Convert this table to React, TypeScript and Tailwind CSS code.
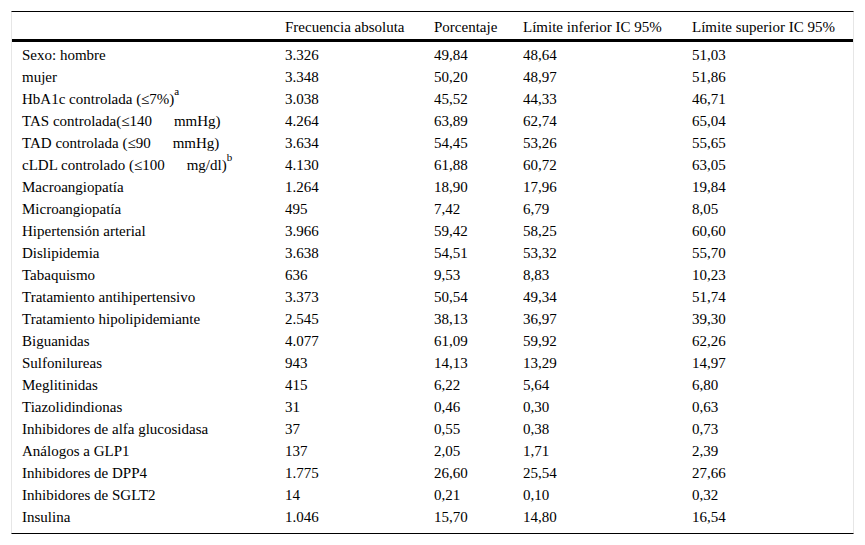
import React from "react";

const Sup = ({ c }: { c: string }) => (
  <span className="text-[11px] align-top relative -top-[2px] leading-none">{c}</span>
);

const Gap = () => <span className="inline-block w-[22px]" />;

const rows: [React.ReactNode, string, string, string, string][] = [
  ["Sexo: hombre", "3.326", "49,84", "48,64", "51,03"],
  ["mujer", "3.348", "50,20", "48,97", "51,86"],
  [<>HbA1c controlada (≤7%)<Sup c="a" /></>, "3.038", "45,52", "44,33", "46,71"],
  [<>TAS controlada(≤140<Gap />mmHg)</>, "4.264", "63,89", "62,74", "65,04"],
  [<>TAD controlada (≤90<Gap />mmHg)</>, "3.634", "54,45", "53,26", "55,65"],
  [<>cLDL controlado (≤100<Gap />mg/dl)<Sup c="b" /></>, "4.130", "61,88", "60,72", "63,05"],
  ["Macroangiopatía", "1.264", "18,90", "17,96", "19,84"],
  ["Microangiopatía", "495", "7,42", "6,79", "8,05"],
  ["Hipertensión arterial", "3.966", "59,42", "58,25", "60,60"],
  ["Dislipidemia", "3.638", "54,51", "53,32", "55,70"],
  ["Tabaquismo", "636", "9,53", "8,83", "10,23"],
  ["Tratamiento antihipertensivo", "3.373", "50,54", "49,34", "51,74"],
  ["Tratamiento hipolipidemiante", "2.545", "38,13", "36,97", "39,30"],
  ["Biguanidas", "4.077", "61,09", "59,92", "62,26"],
  ["Sulfonilureas", "943", "14,13", "13,29", "14,97"],
  ["Meglitinidas", "415", "6,22", "5,64", "6,80"],
  ["Tiazolidindionas", "31", "0,46", "0,30", "0,63"],
  ["Inhibidores de alfa glucosidasa", "37", "0,55", "0,38", "0,73"],
  ["Análogos a GLP1", "137", "2,05", "1,71", "2,39"],
  ["Inhibidores de DPP4", "1.775", "26,60", "25,54", "27,66"],
  ["Inhibidores de SGLT2", "14", "0,21", "0,10", "0,32"],
  ["Insulina", "1.046", "15,70", "14,80", "16,54"],
];

export default function App() {
  return (
    <div className="w-[865px] h-[545px] bg-white pt-[11px] pl-[11px] font-['Liberation_Serif',_'Times_New_Roman',_serif]">
      <div className="w-[843px] border-t border-t-black border-b border-b-black border-x border-x-[#e6e6e6] text-[15px] text-black leading-[22px]">
        <div className="grid grid-cols-[263px_149px_89px_169px_1fr] h-[30px] pt-[3px] items-center border-b-[3px] border-b-black">
          <div className="pl-[10px]"></div>
          <div className="pl-[10px]">Frecuencia absoluta</div>
          <div className="pl-[10px]">Porcentaje</div>
          <div className="pl-[10px]">Límite inferior IC 95%</div>
          <div className="pl-[10px]">Límite superior IC 95%</div>
        </div>
        <div className="pt-[2px] pb-[5px]">
          {rows.map((r, i) => (
            <div key={i} className="grid grid-cols-[263px_149px_89px_169px_1fr] h-[22px] items-center">
              {r.map((c, j) => (
                <div key={j} className="pl-[10px] whitespace-nowrap">{c}</div>
              ))}
            </div>
          ))}
        </div>
      </div>
    </div>
  );
}
